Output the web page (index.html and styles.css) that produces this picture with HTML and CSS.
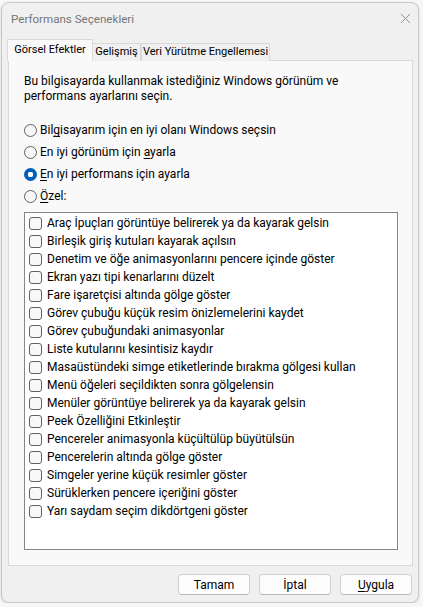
FILE: index.html
```html
<!DOCTYPE html>
<html lang="tr">
<head>
<meta charset="utf-8">
<title>Performans Seçenekleri</title>
<link rel="stylesheet" href="styles.css">
</head>
<body>
<div class="window">
  <div class="titlebar">
    <span class="title">Performans Seçenekleri</span>
    <svg class="close" width="12" height="12" viewBox="0 0 12 12"><path d="M1 1 L11 11 M11 1 L1 11" stroke="#8a8a8a" stroke-width="1" fill="none"/></svg>
  </div>
  <div class="tabs">
    <div class="tab active tab-visual">Görsel Efektler</div>
    <div class="tab tab-adv">Gelişmiş</div>
    <div class="tab tab-dep">Veri Yürütme Engellemesi</div>
  </div>
  <div class="panel">
    <p class="intro">Bu bilgisayarda kullanmak istediğiniz Windows görünüm ve<br>performans ayarlarını seçin.</p>
    <div class="radios">
      <div class="radio"><span class="rb"></span><span>Bil<u>g</u>isayarım için en iyi olanı Windows seçsin</span></div>
      <div class="radio"><span class="rb"></span><span>En iyi görünüm için <u>a</u>yarla</span></div>
      <div class="radio"><span class="rb on"></span><span><u>E</u>n iyi performans için ayarla</span></div>
      <div class="radio"><span class="rb"></span><span><u>Ö</u>zel:</span></div>
    </div>
    <div class="listbox">
      <div class="item"><span class="cb"></span>Araç İpuçları görüntüye belirerek ya da kayarak gelsin</div>
      <div class="item"><span class="cb"></span>Birleşik giriş kutuları kayarak açılsın</div>
      <div class="item"><span class="cb"></span>Denetim ve öğe animasyonlarını pencere içinde göster</div>
      <div class="item"><span class="cb"></span>Ekran yazı tipi kenarlarını düzelt</div>
      <div class="item"><span class="cb"></span>Fare işaretçisi altında gölge göster</div>
      <div class="item"><span class="cb"></span>Görev çubuğu küçük resim önizlemelerini kaydet</div>
      <div class="item"><span class="cb"></span>Görev çubuğundaki animasyonlar</div>
      <div class="item"><span class="cb"></span>Liste kutularını kesintisiz kaydır</div>
      <div class="item"><span class="cb"></span>Masaüstündeki simge etiketlerinde bırakma gölgesi kullan</div>
      <div class="item"><span class="cb"></span>Menü öğeleri seçildikten sonra gölgelensin</div>
      <div class="item"><span class="cb"></span>Menüler görüntüye belirerek ya da kayarak gelsin</div>
      <div class="item"><span class="cb"></span>Peek Özelliğini Etkinleştir</div>
      <div class="item"><span class="cb"></span>Pencereler animasyonla küçültülüp büyütülsün</div>
      <div class="item"><span class="cb"></span>Pencerelerin altında gölge göster</div>
      <div class="item"><span class="cb"></span>Simgeler yerine küçük resimler göster</div>
      <div class="item"><span class="cb"></span>Sürüklerken pencere içeriğini göster</div>
      <div class="item"><span class="cb"></span>Yarı saydam seçim dikdörtgeni göster</div>
    </div>
  </div>
  <div class="buttons">
    <button class="btn">Tamam</button>
    <button class="btn">İptal</button>
    <button class="btn"><u>U</u>ygula</button>
  </div>
</div>
</body>
</html>
```
FILE: styles.css
```css
* { box-sizing: border-box; }
html, body { margin: 0; padding: 0; }
body {
  background: #f7f7f7;
  font-family: Roboto, "Noto Sans", "Liberation Sans", sans-serif;
  font-size: 12px;
  color: #000;
}
.window {
  margin: 2px 0 0 1px;
  width: 418px;
  height: 601px;
  background: #f0f0f0;
  border: 1px solid #c9c9c9;
  border-radius: 8px;
  box-shadow: 0 1px 3px rgba(0,0,0,0.15);
  display: flex;
  flex-direction: column;
}
.titlebar {
  height: 36px;
  display: flex;
  align-items: flex-start;
  justify-content: space-between;
  padding: 8px 0 0 9px;
}
.title { color: #767676; line-height: 16px; font-size: 11.6px; }
.close { margin: 2px 7px 0 0; width: 11px; height: 11px; }
.tabs {
  display: flex;
  align-items: flex-end;
  height: 22px;
  margin-left: 5px;
  position: relative;
  z-index: 1;
  font-size: 11px;
}
.tab {
  height: 18px;
  line-height: 16px;
  text-align: center;
  white-space: nowrap;
  border: 1px solid #d9d9d9;
  border-bottom: none;
  background: #f0f0f0;
}
.tab.active {
  height: 22px;
  line-height: 20px;
  background: #f9f9f9;
}
.tab-visual { width: 86px; }
.tab-adv { width: 48px; border-left: none; }
.tab-dep { width: 129px; }
.panel {
  margin: -1px 5px 0 6px;
  height: 506px;
  border: 1px solid #d9d9d9;
  background: #f9f9f9;
  padding: 13px 14px 0 15px;
  display: flex;
  flex-direction: column;
}
.intro { margin: 0; line-height: 15px; }
.radios { margin-top: 15px; display: flex; flex-direction: column; }
.radio { height: 22px; display: flex; align-items: center; gap: 3px; }
.rb {
  width: 13px; height: 13px;
  border: 1px solid #616161;
  border-radius: 50%;
  background: #f7f7f7;
  flex: none;
}
.rb.on {
  border: none;
  background: radial-gradient(circle, #fff 0 2.6px, #005fb8 3px);
}
.listbox {
  margin-top: 5px;
  height: 338px;
  border: 1px solid #828790;
  background: #fff;
  padding: 1px 0 0 4px;
}
.item { height: 18px; display: flex; align-items: center; gap: 5px; white-space: nowrap; }
.cb {
  width: 13px; height: 13px;
  border: 1px solid #616161;
  border-radius: 3px;
  background: #f8f8f8;
  flex: none;
}
.buttons {
  display: flex;
  justify-content: flex-end;
  gap: 9px;
  margin: 8px 6px 0 0;
}
.btn {
  width: 72px; height: 21px;
  font: inherit;
  color: #000;
  background: #fdfdfd;
  border: 1px solid #d0d0d0;
  border-bottom-color: #b8b8b8;
  border-radius: 4px;
  padding: 0;
}
u { text-decoration-thickness: 1px; text-underline-offset: 2px; }
```
